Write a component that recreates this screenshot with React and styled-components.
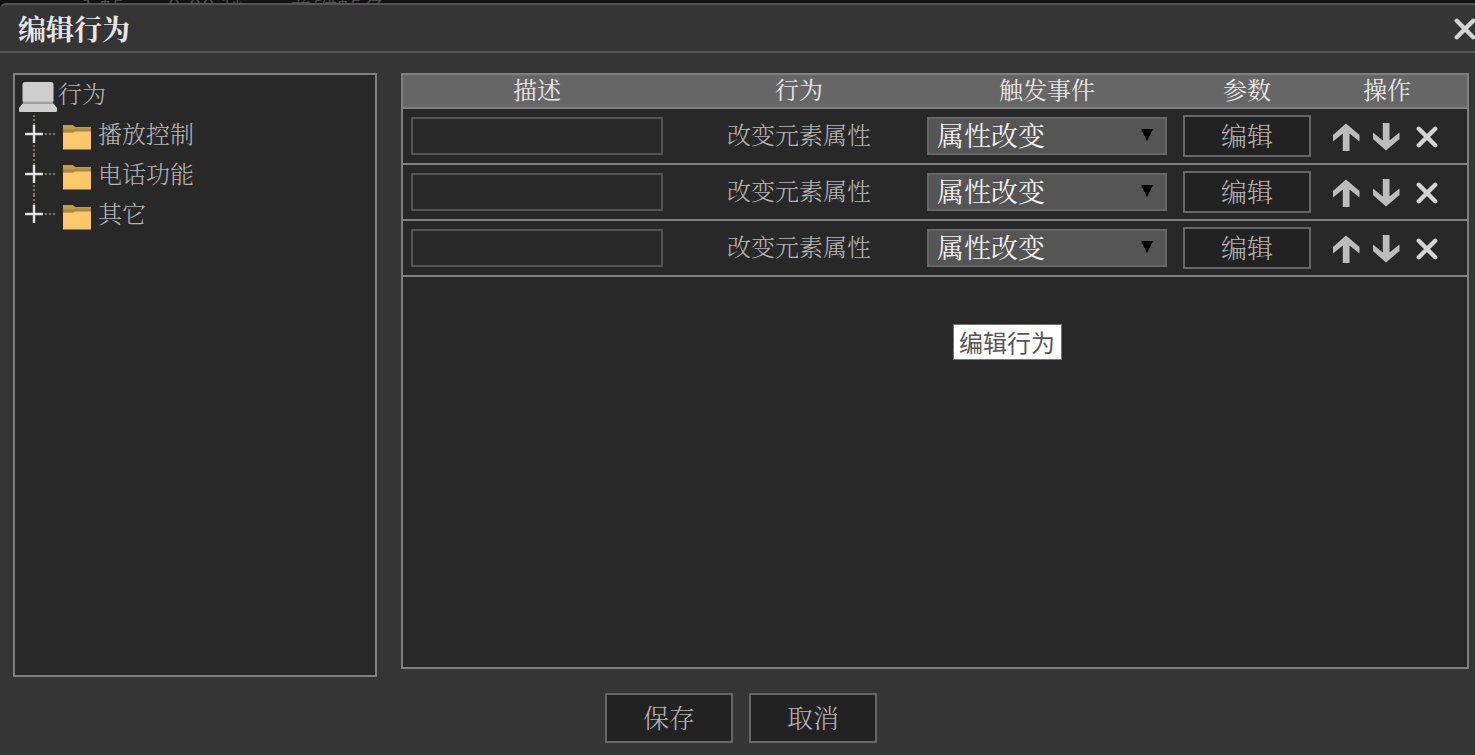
import React, { useState } from "react";
import styled, { createGlobalStyle } from "styled-components";

const GlobalStyle = createGlobalStyle`
  * {
    box-sizing: border-box;
  }
  body {
    margin: 0;
    background: #111;
    overflow: hidden;
  }
  body, button, input, select {
    font-family: "Noto Serif CJK SC", "Noto Sans CJK SC", serif;
    font-weight: 300;
  }
`;

const Page = styled.div`
  position: relative;
  height: 100vh;
  display: flex;
  flex-direction: column;
  overflow: hidden;
  color: #b4b4b4;
  font-size: 24px;
`;

/* the timeline bar that stays behind the dialog */

const Backdrop = styled.div`
  flex: none;
  height: 3px;
  padding-left: 82px;
  display: flex;
  align-items: flex-start;
  gap: 44px;
  overflow: hidden;
  color: #555;
  line-height: 14px;
`;

/* the dialog runs a little past the right edge of the window */

const Dialog = styled.section`
  flex: 1;
  min-height: 0;
  margin-right: -7px;
  display: flex;
  flex-direction: column;
  border-top: 2px solid #555;
  border-top-left-radius: 6px;
  background: #353535;
`;

const TitleBar = styled.header`
  display: flex;
  align-items: center;
  justify-content: space-between;
  height: 48px;
  padding: 0 4px 0 18px;
  border-bottom: 2px solid #555;
`;

const Title = styled.h1`
  margin: 0;
  font-size: 28px;
  line-height: 40px;
  font-weight: 700;
  color: #e6e6e6;
`;

const IconButton = styled.button`
  display: flex;
  align-items: center;
  justify-content: center;
  width: ${p => p.$width || 40}px;
  height: 40px;
  padding: 2px 0 0;
  border: 0;
  background: none;
`;

const Body = styled.div`
  flex: 1;
  min-height: 0;
  display: flex;
  gap: 24px;
  padding: 20px 13px 0;
`;

const Panel = styled.div`
  border: 2px solid #808080;
  background: #282828;
`;

const TreePanel = styled(Panel)`
  flex: none;
  width: 364px;
`;

const ListPanel = styled(Panel)`
  flex: 1;
  min-width: 0;
  margin-bottom: 8px;
`;

const TreeRoot = styled.div`
  display: flex;
  align-items: center;
  height: 40px;
  padding-left: 3px;
`;

const TreeList = styled.ul`
  margin: 0;
  padding: 0;
  list-style: none;
`;

const TreeNode = styled.li`
  display: flex;
  align-items: center;
  height: 40px;
`;

const TreeLabel = styled.span`
  padding-bottom: 4px;
  line-height: 36px;
`;

const Expander = styled.button`
  display: flex;
  padding: 0;
  border: 0;
  background: none;
`;

const Table = styled.table`
  width: 100%;
  table-layout: fixed;
  border-collapse: separate;
  border-spacing: 0;
`;

const Col = styled.col`
  width: ${p => p.$width};
`;

const HeadCell = styled.th`
  height: 34px;
  padding: ${p => p.$pad || "0 8px 4px"};
  border-bottom: 2px solid #808080;
  background: #666;
  color: #e6e6e6;
  font-weight: 400;
  line-height: 28px;
`;

const Cell = styled.td`
  height: 56px;
  padding: ${p => p.$pad || "0 8px"};
  border-bottom: 2px solid #808080;
  text-align: center;
  line-height: 36px;
`;

const TextField = styled.input`
  display: block;
  width: 100%;
  height: 38px;
  padding: 0 8px;
  border: 2px solid #555;
  background: #282828;
  color: #e6e6e6;
  font-size: 24px;
`;

const SelectBox = styled.div`
  position: relative;
`;

const Select = styled.select`
  display: block;
  width: 100%;
  height: 38px;
  padding: 0 32px 2px 8px;
  appearance: none;
  border: 2px solid #666;
  border-radius: 0;
  background: #555;
  color: #f0f0f0;
  font-size: 27px;
  font-weight: 400;
  line-height: 32px;
`;

const Caret = styled.svg`
  position: absolute;
  top: 12px;
  right: 14px;
  pointer-events: none;
`;

const Button = styled.button`
  display: block;
  width: 128px;
  height: ${p => (p.$large ? 50 : 42)}px;
  padding: 0 0 2px;
  border: 2px solid #666;
  background: #222;
  color: #b4b4b4;
  font-size: 26px;
  line-height: 36px;
`;

const Actions = styled.div`
  display: flex;
`;

const Footer = styled.footer`
  display: flex;
  justify-content: center;
  gap: 16px;
  padding: 16px 0 12px;
`;

const Tooltip = styled.div`
  position: absolute;
  left: 953px;
  top: 324px;
  padding: 0 6px 0 5px;
  border: 1px solid #767676;
  background: #fff;
  color: #575757;
  font-family: "Noto Sans CJK SC", sans-serif;
  font-weight: 400;
  line-height: 34px;
`;

const UpIcon = () => (
  <svg width="28" height="30" viewBox="0 0 28 30" aria-hidden="true">
    <path d="M13 1.500L26.500 13V19.500L16.500 11.500V29H9.800V11.500L0 19.500V13Z" fill="#bdbdbd" />
  </svg>
);

const DownIcon = () => (
  <svg width="28" height="30" viewBox="0 0 28 30" aria-hidden="true">
    <path d="M13 28.500L26.500 17V10.500L16.500 18.500V1H9.800V18.500L0 10.500V17Z" fill="#bdbdbd" />
  </svg>
);

const CrossIcon = () => (
  <svg width="22" height="22" viewBox="0 0 22 22" aria-hidden="true">
    <path d="M2.800 2.800L19.200 19.200M19.200 2.800L2.800 19.200" stroke="#d4d4d4" strokeWidth="4.400" strokeLinecap="round" />
  </svg>
);

const LaptopIcon = () => (
  <svg width="40" height="34" viewBox="0 0 40 34" aria-hidden="true">
    <rect x="4.500" y="4" width="31" height="21" rx="2.500" fill="#cecece" />
    <path d="M5 23.500H35V25.500H5Z" fill="#a4a4a4" />
    <path d="M4.500 25.500H35.500L39 30V32.500Q39 34 38 34H2Q1 34 1 32.500V30Z" fill="#cecece" />
  </svg>
);

const FolderIcon = () => (
  <svg width="41" height="40" viewBox="0 0 41 40" aria-hidden="true">
    <path d="M6 10H16L18 12H34V18H6Z" fill="#c49a4c" />
    <path d="M6 14.500H17L19 13.500H34V17H6Z" fill="#a98747" />
    <path d="M6 18H16L18 16.500H34V34.500H6Z" fill="#fac76a" />
  </svg>
);

const PlusIcon = ({ last }) => (
  <svg width="42" height="40" viewBox="0 0 42 40" aria-hidden="true">
    <path d={last ? "M19 0V10" : "M19 0V10M19 30V40"} stroke="#7d7664" strokeWidth="2" strokeDasharray="2 2" />
    <path d="M30 19H41" stroke="#7d7664" strokeWidth="2" strokeDasharray="2 2" />
    <path d="M10 19H28M19 10V28" stroke="#e4e4e4" strokeWidth="2.400" />
  </svg>
);

const folders = ["播放控制", "电话功能", "其它"];

const ActionRow = ({ index }) => {
  const [text, setText] = useState("");
  return (
    <tr>
      <Cell>
        <TextField aria-label={`描述 ${index}`} value={text} onChange={e => setText(e.target.value)} />
      </Cell>
      <Cell $pad="0 8px 4px 16px">改变元素属性</Cell>
      <Cell>
        <SelectBox>
          <Select aria-label={`触发事件 ${index}`}>
            <option>属性改变</option>
          </Select>
          <Caret width="12" height="12" viewBox="0 0 12 12" aria-hidden="true">
            <path d="M0 0H12L6 12Z" fill="#000" />
          </Caret>
        </SelectBox>
      </Cell>
      <Cell><Button type="button">编辑</Button></Cell>
      <Cell $pad="0 20px 0 8px">
        <Actions>
          <IconButton type="button" aria-label="上移"><UpIcon /></IconButton>
          <IconButton type="button" aria-label="下移"><DownIcon /></IconButton>
          <IconButton type="button" aria-label="删除"><CrossIcon /></IconButton>
        </Actions>
      </Cell>
    </tr>
  );
};

const App = () => {
  return (
    <Page>
      <GlobalStyle />
      <Backdrop>
        <span>1 帧</span>
        <span>0.00 秒</span>
        <span>关键帧名</span>
      </Backdrop>
      <Dialog role="dialog" aria-labelledby="dialog-title">
        <TitleBar>
          <Title id="dialog-title">编辑行为</Title>
          <IconButton type="button" aria-label="关闭" $width={26}><CrossIcon /></IconButton>
        </TitleBar>
        <Body>
          <TreePanel>
            <TreeRoot>
              <LaptopIcon />
              <TreeLabel>行为</TreeLabel>
            </TreeRoot>
            <TreeList>
              {folders.map((name, i) => (
                <TreeNode key={name}>
                  <Expander type="button" aria-label={`展开 ${name}`}>
                    <PlusIcon last={i === folders.length - 1} />
                  </Expander>
                  <FolderIcon />
                  <TreeLabel>{name}</TreeLabel>
                </TreeNode>
              ))}
            </TreeList>
          </TreePanel>
          <ListPanel>
            <Table>
              <colgroup>
                <Col $width="auto" />
                <Col $width="248px" />
                <Col $width="256px" />
                <Col $width="144px" />
                <Col $width="148px" />
              </colgroup>
              <thead>
                <tr>
                  <HeadCell>描述</HeadCell>
                  <HeadCell $pad="0 8px 4px 16px">行为</HeadCell>
                  <HeadCell>触发事件</HeadCell>
                  <HeadCell>参数</HeadCell>
                  <HeadCell $pad="0 20px 4px 8px">操作</HeadCell>
                </tr>
              </thead>
              <tbody>
                {[1, 2, 3].map(n => <ActionRow key={n} index={n} />)}
              </tbody>
            </Table>
          </ListPanel>
        </Body>
        <Footer>
          <Button type="button" $large>保存</Button>
          <Button type="button" $large>取消</Button>
        </Footer>
      </Dialog>
      <Tooltip role="tooltip">编辑行为</Tooltip>
    </Page>
  );
};

export default App;
